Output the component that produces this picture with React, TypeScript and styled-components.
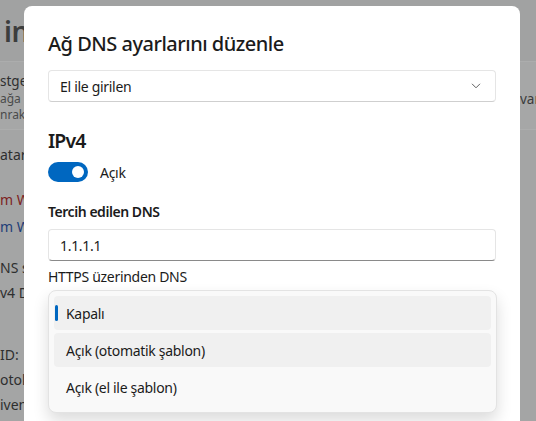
import React from "react";
import styled, { createGlobalStyle } from "styled-components";

const Global = createGlobalStyle`
  html, body { margin: 0; padding: 0; }
  body {
    width: 536px; height: 421px; overflow: hidden;
    font-family: "Segoe UI", "Noto Sans", "Open Sans", sans-serif;
    background: #a3a4a4;
  }
`;

const Page = styled.div`
  position: relative;
  width: 536px;
  height: 421px;
  overflow: hidden;
  display: flex;
  flex-direction: column;
  background: #a4a5a5;
  color: #2e2e2e;
`;

const PageHeader = styled.div`
  height: 61px;
  display: flex;
  align-items: center;
  padding-left: 4px;
  font-size: 28px;
  font-weight: 600;
  letter-spacing: -0.5px;
  color: #3c3d3d;
  background: #a1a2a2;
  border-bottom: 1px solid #acadad;
`;

const Card = styled.div`
  height: 67px;
  display: flex;
  justify-content: space-between;
  align-items: flex-start;
  border-bottom: 1px solid #acadad;
  background: #a6a7a7;
`;

const CardText = styled.div`
  display: flex;
  flex-direction: column;
  padding-top: 9px;
`;

const CardLine = styled.div<{ $small?: boolean }>`
  font-size: ${(p) => (p.$small ? "12px" : "13.5px")};
  line-height: ${(p) => (p.$small ? "16px" : "20px")};
  color: ${(p) => (p.$small ? "#4a4b4b" : "#2e2f2f")};
  white-space: nowrap;
`;

const CardAction = styled.div`
  margin-top: 28px;
  font-size: 13.5px;
  color: #3a3b3b;
  white-space: nowrap;
  width: 16px;
  overflow: hidden;
`;

const Details = styled.div`
  display: flex;
  flex-direction: column;
`;

const DetailLine = styled.div<{ $top: number; $tone?: "red" | "blue" }>`
  margin-top: ${(p) => p.$top}px;
  font-size: 14px;
  line-height: 20px;
  white-space: nowrap;
  color: ${(p) => (p.$tone === "red" ? "#7d1f1f" : p.$tone === "blue" ? "#1f3e78" : "#2e2f2f")};
`;

const Dialog = styled.div`
  position: absolute;
  left: 24px;
  top: 6px;
  width: 496px;
  height: 440px;
  background: #ffffff;
  border-radius: 8px;
  box-sizing: border-box;
  padding: 24px 24px 0 24px;
  display: flex;
  flex-direction: column;
  color: #1b1b1b;
  letter-spacing: -0.3px;
`;

const Title = styled.h1`
  margin: 0;
  font-size: 20px;
  line-height: 28px;
  font-weight: 500;
  letter-spacing: -0.5px;
`;

const Field = styled.div<{ $top: number }>`
  margin-top: ${(p) => p.$top}px;
  height: 32px;
  box-sizing: border-box;
  border: 1px solid #e5e5e5;
  border-bottom-color: #cfcfcf;
  border-radius: 4px;
  display: flex;
  align-items: center;
  justify-content: space-between;
  padding: 0 14px 0 11px;
  font-size: 14px;
  background: #ffffff;
`;

const InputField = styled(Field)`
  border-bottom: 1px solid #8a8a8a;
`;

const SectionHeading = styled.h2<{ $top: number }>`
  margin: ${(p) => p.$top}px 0 0 0;
  font-size: 19.5px;
  line-height: 28px;
  font-weight: 600;
  letter-spacing: -0.9px;
`;

const ToggleRow = styled.div`
  margin-top: 7px;
  display: flex;
  align-items: center;
  gap: 12px;
  font-size: 14px;
`;

const Toggle = styled.div`
  position: relative;
  width: 40px;
  height: 20px;
  border-radius: 10px;
  background: #0067c0;
`;

const Knob = styled.span`
  position: absolute;
  right: 4px;
  top: 4px;
  width: 12px;
  height: 12px;
  border-radius: 50%;
  background: #ffffff;
`;

const Label = styled.div<{ $top: number; $bold?: boolean }>`
  margin-top: ${(p) => p.$top}px;
  font-size: 14px;
  line-height: 20px;
  font-weight: ${(p) => (p.$bold ? 600 : 400)};
  letter-spacing: ${(p) => (p.$bold ? "-0.45px" : "-0.3px")};
`;

const Popup = styled.div`
  margin: 3px -1px 0 0;
  box-sizing: border-box;
  padding: 5px 5px 8px 5px;
  background: #f9f9f9;
  border: 1px solid #e3e3e3;
  border-radius: 8px;
  box-shadow: 0 8px 16px rgba(0, 0, 0, 0.14);
  display: flex;
  flex-direction: column;
  gap: 3px;
`;

const Option = styled.div<{ $shaded?: boolean }>`
  position: relative;
  height: 34px;
  display: flex;
  align-items: center;
  padding-left: 12px;
  border-radius: 4px;
  font-size: 14px;
  background: ${(p) => (p.$shaded ? "#f0f0f0" : "transparent")};
`;

const Indicator = styled.span`
  position: absolute;
  left: 1px;
  top: 9px;
  width: 3px;
  height: 16px;
  border-radius: 2px;
  background: #0067c0;
`;

const Chevron = () => (
  <svg width="10" height="6" viewBox="0 0 10 6">
    <path d="M1 0.8 L5 4.8 L9 0.8" fill="none" stroke="#5f5f5f" strokeWidth="1" />
  </svg>
);

export default function App() {
  return (
    <>
      <Global />
      <Page>
        <PageHeader>in</PageHeader>
        <Card>
          <CardText>
            <CardLine>stge</CardLine>
            <CardLine $small>ağa</CardLine>
            <CardLine $small>nraki</CardLine>
          </CardText>
          <CardAction>varc</CardAction>
        </Card>
        <Details>
          <DetailLine $top={15}>atar</DetailLine>
          <DetailLine $top={25} $tone="red">m W</DetailLine>
          <DetailLine $top={7} $tone="blue">m W</DetailLine>
          <DetailLine $top={21}>NS s</DetailLine>
          <DetailLine $top={5}>v4 D</DetailLine>
          <DetailLine $top={42}>ID:</DetailLine>
          <DetailLine $top={5}>otok</DetailLine>
          <DetailLine $top={5}>iven</DetailLine>
        </Details>

        <Dialog>
          <Title>Ağ DNS ayarlarını düzenle</Title>
          <Field $top={12}>
            <span>El ile girilen</span>
            <Chevron />
          </Field>
          <SectionHeading $top={25}>IPv4</SectionHeading>
          <ToggleRow>
            <Toggle>
              <Knob />
            </Toggle>
            <span>Açık</span>
          </ToggleRow>
          <Label $top={20} $bold>Tercih edilen DNS</Label>
          <InputField $top={7}>
            <span>1.1.1.1</span>
          </InputField>
          <Label $top={6}>HTTPS üzerinden DNS</Label>
          <Popup>
            <Option $shaded>
              <Indicator />
              Kapalı
            </Option>
            <Option $shaded>Açık (otomatik şablon)</Option>
            <Option>Açık (el ile şablon)</Option>
          </Popup>
        </Dialog>
      </Page>
    </>
  );
}
